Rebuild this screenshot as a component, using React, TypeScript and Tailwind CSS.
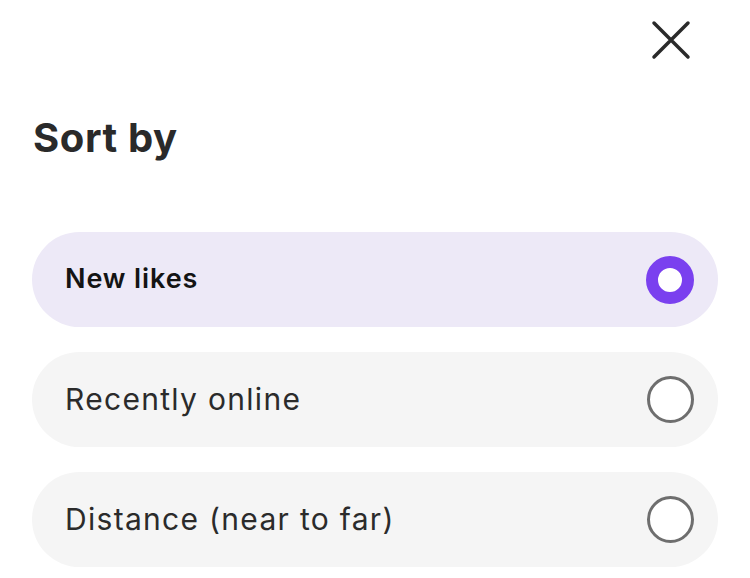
import { FC } from 'react'

interface OptionProps {
  label: string
  selected?: boolean
}

const Option: FC<OptionProps> = ({ label, selected }) => (
  <div
    className={`flex h-[95px] items-center justify-between rounded-full pl-[33px] pr-[24px] ${
      selected ? 'bg-[#ede9f7]' : 'bg-[#f5f5f5]'
    }`}
  >
    <span
      className={
        selected
          ? 'text-[27px] font-semibold tracking-[0.9px] text-[#141414]'
          : 'text-[30px] font-normal tracking-[1.3px] text-[#2b2b2b]'
      }
    >
      {label}
    </span>
    {selected ? (
      <span className="h-[48px] w-[48px] rounded-full border-[12px] border-[#7a40ef] bg-white" />
    ) : (
      <span className="h-[47px] w-[47px] rounded-full border-[3px] border-[#6e6e6e] bg-white" />
    )}
  </div>
)

export default function App() {
  return (
    <div
      className="h-[578px] w-[750px] overflow-hidden bg-white"
      style={{ fontFamily: 'Inter, "Noto Sans", sans-serif' }}
    >
      <div className="flex justify-end pr-[59px] pt-[20px]">
        <svg width="40" height="40" viewBox="0 0 40 40" fill="none">
          <path
            d="M3 3L37 37M37 3L3 37"
            stroke="#2a2a2a"
            strokeWidth="3.5"
            strokeLinecap="round"
          />
        </svg>
      </div>
      <h1 className="mt-[58px] pl-[33px] text-[40px] font-bold leading-none tracking-[0.6px] text-[#2a2a2a]">
        Sort by
      </h1>
      <div className="mt-[74px] flex flex-col gap-[25px] px-[32px]">
        <Option label="New likes" selected />
        <Option label="Recently online" />
        <Option label="Distance (near to far)" />
      </div>
    </div>
  )
}
